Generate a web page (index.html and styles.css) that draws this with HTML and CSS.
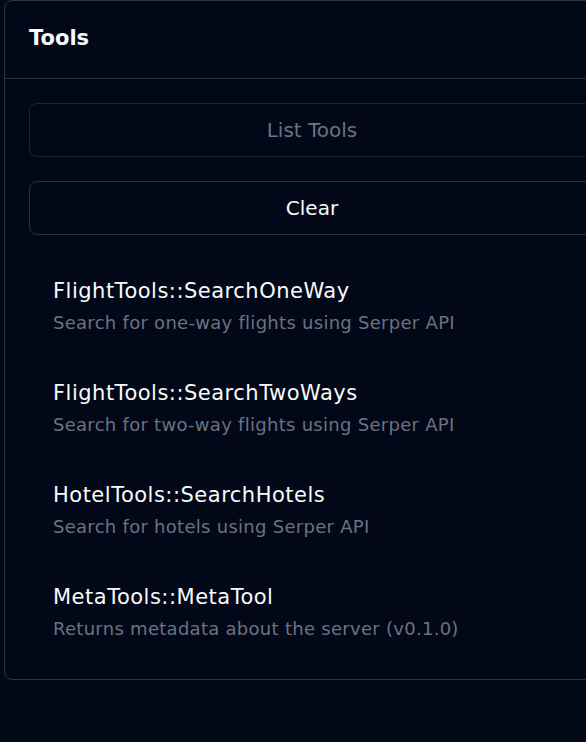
FILE: index.html
```html
<!DOCTYPE html>
<html>
<head>
<meta charset="utf-8">
<link rel="stylesheet" href="styles.css">
</head>
<body>
<div class="card">
  <div class="card-header"><h2 class="title">Tools</h2></div>
  <div class="card-body">
    <button class="btn btn-disabled" disabled>List Tools</button>
    <button class="btn">Clear</button>
    <ul class="tool-list">
      <li class="tool">
        <div class="tool-name">FlightTools::SearchOneWay</div>
        <div class="tool-desc">Search for one-way flights using Serper API</div>
      </li>
      <li class="tool">
        <div class="tool-name">FlightTools::SearchTwoWays</div>
        <div class="tool-desc">Search for two-way flights using Serper API</div>
      </li>
      <li class="tool">
        <div class="tool-name">HotelTools::SearchHotels</div>
        <div class="tool-desc">Search for hotels using Serper API</div>
      </li>
      <li class="tool">
        <div class="tool-name">MetaTools::MetaTool</div>
        <div class="tool-desc">Returns metadata about the server (v0.1.0)</div>
      </li>
    </ul>
  </div>
</div>
</body>
</html>
```
FILE: styles.css
```css
html, body {
  margin: 0;
  padding: 0;
  background: #020817;
  overflow: hidden;
}
body {
  font-family: "DejaVu Sans", sans-serif;
  color: #f8fafc;
  width: 586px;
  height: 742px;
}
.card {
  margin-left: 4px;
  width: 616px;
  border: 1px solid #2a3242;
  border-radius: 8px;
  box-sizing: border-box;
}
.card-header {
  height: 78px;
  box-sizing: border-box;
  border-bottom: 1px solid #2a3242;
  display: flex;
  align-items: center;
  padding: 0 24px 2px;
}
.title {
  margin: 0;
  font-size: 21px;
  font-weight: 700;
  line-height: 1;
}
.card-body {
  padding: 24px 24px 12px;
  display: flex;
  flex-direction: column;
  gap: 24px;
}
.btn {
  height: 54px;
  background: transparent;
  border: 1px solid #2a3242;
  border-radius: 8px;
  color: #f8fafc;
  font-family: inherit;
  font-size: 20px;
}
.btn-disabled {
  color: #6b7280;
  border-color: #1c2333;
}
.tool-list {
  list-style: none;
  margin: 0;
  padding: 0;
}
.tool {
  padding: 16px 24px;
  height: 102px;
  box-sizing: border-box;
}
.tool-name {
  font-size: 21px;
  letter-spacing: 0.5px;
  line-height: 32px;
}
.tool-desc {
  font-size: 18px;
  letter-spacing: 0.28px;
  line-height: 31px;
  color: #6b7280;
}
```
